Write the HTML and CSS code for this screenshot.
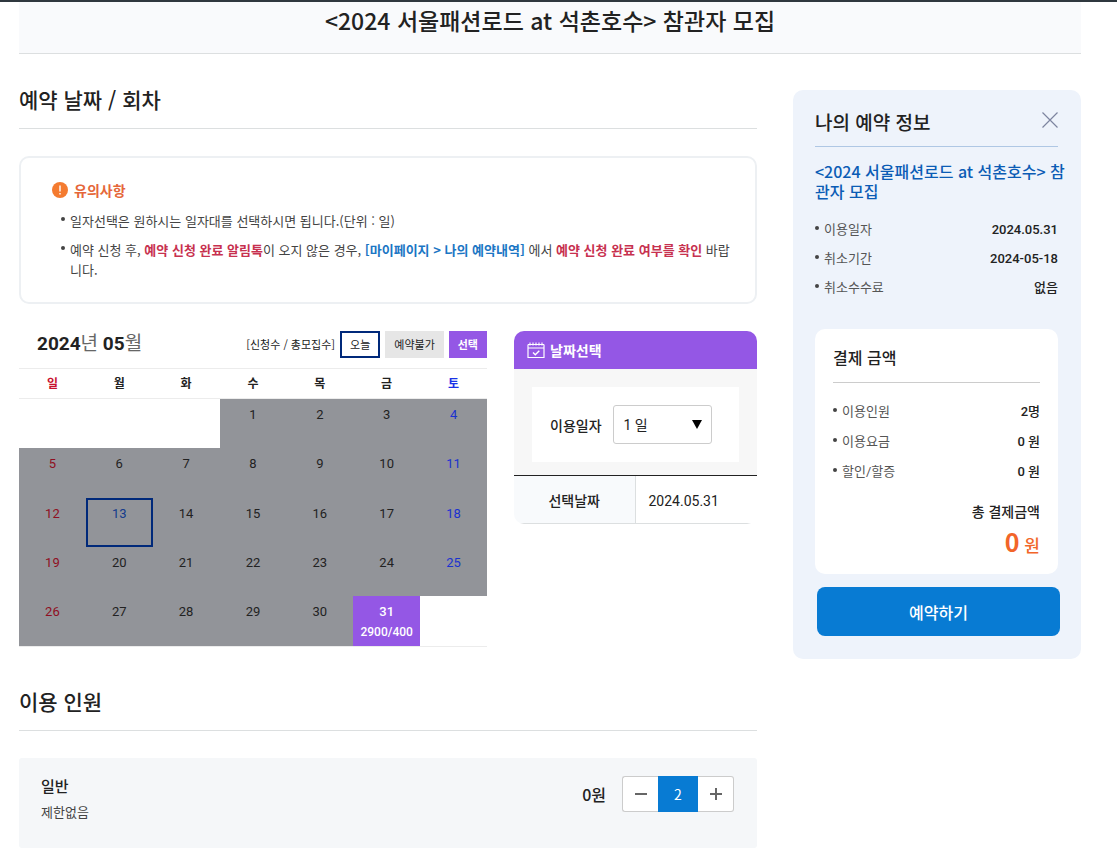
FILE: index.html
```html
<!DOCTYPE html>
<html lang="ko">
<head>
<meta charset="utf-8">
<meta name="viewport" content="width=device-width, initial-scale=1">
<title>서울패션로드 예약</title>
<link rel="stylesheet" href="styles.css">
</head>
<body>
<div class="page">
  <header class="page-title"><h1>&lt;2024 서울패션로드 at 석촌호수&gt; 참관자 모집</h1></header>
  <div class="layout">
    <main>
      <section>
        <h2 class="section-title">예약 날짜 / 회차</h2>
        <div class="notice">
          <h3 class="notice-title">
            <svg width="16" height="16" viewBox="0 0 16 16" aria-hidden="true"><circle cx="8" cy="8" r="8" fill="#f47b30"/><path d="M8 3.5v6M8 11v1.5" stroke="#fff" stroke-width="1.4"/></svg>
            유의사항
          </h3>
          <ul class="notice-list">
            <li><p>일자선택은 원하시는 일자대를 선택하시면 됩니다.(단위 : 일)</p></li>
            <li><p>예약 신청 후, <strong class="red">예약 신청 완료 알림톡</strong>이 오지 않은 경우, <strong class="blue">[마이페이지 &gt; 나의 예약내역]</strong> 에서 <strong class="red">예약 신청 완료 여부를 확인</strong> 바랍니다.</p></li>
          </ul>
        </div>
        <div class="booking">
          <div class="calendar">
            <div class="calendar-head">
              <h3 class="month"><b>2024</b>년 <b>05</b>월</h3>
              <div class="legend">
                <span class="legend-note">[신청수 / 총모집수]</span>
                <span class="tag tag-today">오늘</span>
                <span class="tag tag-off">예약불가</span>
                <span class="tag tag-on">선택</span>
              </div>
            </div>
            <table class="days">
              <thead><tr><th class="sun">일</th><th>월</th><th>화</th><th>수</th><th>목</th><th>금</th><th class="sat">토</th></tr></thead>
              <tbody>
                <tr><td class="empty"></td><td class="empty"></td><td class="empty"></td><td>1</td><td>2</td><td>3</td><td class="sat">4</td></tr>
                <tr><td class="sun">5</td><td>6</td><td>7</td><td>8</td><td>9</td><td>10</td><td class="sat">11</td></tr>
                <tr><td class="sun">12</td><td class="today">13</td><td>14</td><td>15</td><td>16</td><td>17</td><td class="sat">18</td></tr>
                <tr><td class="sun">19</td><td>20</td><td>21</td><td>22</td><td>23</td><td>24</td><td class="sat">25</td></tr>
                <tr><td class="sun">26</td><td>27</td><td>28</td><td>29</td><td>30</td><td class="selected">31<span class="count">2900/400</span></td><td class="empty"></td></tr>
              </tbody>
            </table>
          </div>
          <div class="picker">
            <h3 class="picker-title">
              <svg width="18" height="17" viewBox="0 0 18 17" fill="none" stroke="#fff" aria-hidden="true"><path d="M1 2.5v13h16v-13M1 6h16M1 2.5h16" stroke-width="1.2"/><path d="M3 .5v3M6 .5v3M9 .5v3M12 .5v3M15 .5v3" stroke-width="1.1"/><path d="M6 10.5l2.3 2.2 4-4" stroke-width="1.4"/></svg>
              날짜선택
            </h3>
            <div class="picker-body">
              <div class="picker-field">
                <label for="use-days">이용일자</label>
                <span class="select-wrap">
                  <select id="use-days"><option>1 일</option></select>
                  <svg class="arrow" width="10" height="9" viewBox="0 0 10 9" aria-hidden="true"><path d="M0 0h10L5 9z"/></svg>
                </span>
              </div>
            </div>
            <table class="chosen"><tbody><tr><th scope="row">선택날짜</th><td>2024.05.31</td></tr></tbody></table>
          </div>
        </div>
      </section>
      <section class="people">
        <h2 class="section-title">이용 인원</h2>
        <div class="people-row">
          <div class="people-type"><strong>일반</strong><span>제한없음</span></div>
          <span class="people-price">0원</span>
          <div class="stepper">
            <button type="button" aria-label="인원 감소"><svg width="12" height="12" viewBox="0 0 12 12" aria-hidden="true"><path d="M0 6h12" stroke="#666" stroke-width="2"/></svg></button>
            <input type="text" value="2" aria-label="인원">
            <button type="button" aria-label="인원 추가"><svg width="12" height="12" viewBox="0 0 12 12" aria-hidden="true"><path d="M0 6h12M6 0v12" stroke="#666" stroke-width="2"/></svg></button>
          </div>
        </div>
      </section>
    </main>
    <aside class="summary">
      <div class="summary-head">
        <h2>나의 예약 정보</h2>
        <button type="button" class="close" aria-label="닫기"><svg width="16" height="16" viewBox="0 0 16 16" aria-hidden="true"><path d="M.5.5l15 15M15.5.5l-15 15" stroke="#7d84a0" stroke-width="1.2"/></svg></button>
      </div>
      <p class="summary-name">&lt;2024 서울패션로드 at 석촌호수&gt; 참관자 모집</p>
      <dl class="info">
        <div><dt>이용일자</dt><dd>2024.05.31</dd></div>
        <div><dt>취소기간</dt><dd>2024-05-18</dd></div>
        <div><dt>취소수수료</dt><dd>없음</dd></div>
      </dl>
      <div class="payment">
        <h3>결제 금액</h3>
        <dl class="info">
          <div><dt>이용인원</dt><dd>2명</dd></div>
          <div><dt>이용요금</dt><dd>0 원</dd></div>
          <div><dt>할인/할증</dt><dd>0 원</dd></div>
        </dl>
        <p class="total-label">총 결제금액</p>
        <p class="total"><b>0</b> 원</p>
      </div>
      <button type="button" class="reserve">예약하기</button>
    </aside>
  </div>
</div>
</body>
</html>
```
FILE: styles.css
```css
* { box-sizing: border-box; }
body, h1, h2, h3, p, ul, dl, dd { margin: 0; }
body {
  border-top: 2px solid #2f383f;
  background: #fff;
  color: #222;
  font: 13px/20px "Noto Sans CJK KR", sans-serif;
}
button, input, select { font: inherit; color: inherit; }
button { cursor: pointer; }
svg { display: block; flex: none; }

.page { padding: 0 36px 13px 19px; }
.page-title {
  padding: 2px 0 17px;
  background: #f9fafc;
  border-bottom: 1px solid #dcdfe0;
  text-align: center;
}
h1 { font-size: 23px; line-height: 32px; font-weight: 500; }

.layout {
  display: grid;
  grid-template-columns: minmax(0, 1fr) 288px;
  align-items: start;
  gap: 36px;
  padding-top: 36px;
}
.section-title {
  padding-bottom: 20px;
  border-bottom: 1px solid #dcdfe0;
  font-size: 21px;
  line-height: 18px;
  font-weight: 500;
}

.notice {
  margin-top: 27px;
  padding: 22px 22px 22px 31px;
  border: 2px solid #edf0f3;
  border-radius: 10px;
}
.notice-title {
  display: flex;
  align-items: center;
  gap: 6px;
  color: #e5673a;
  font-size: 14px;
  line-height: 20px;
  font-weight: 700;
}
.notice-list {
  display: grid;
  gap: 9px;
  margin-top: 11px;
  padding: 0 0 0 9px;
  list-style: none;
  color: #444;
}
.notice-list li { display: flex; gap: 5px; }
.notice-list li::before, .info dt::before {
  content: "";
  flex: none;
  width: 4px;
  height: 4px;
  margin-top: 6px;
  border-radius: 50%;
  background: #444;
}
.notice-list strong { font-weight: 700; }
.red { color: #c7314f; }
.blue { color: #1b76c4; }

.booking {
  display: grid;
  grid-template-columns: minmax(0, 1fr) 243px;
  align-items: start;
  gap: 27px;
  margin-top: 27px;
}
.calendar-head {
  display: flex;
  justify-content: space-between;
  padding: 0 0 10px 18px;
  border-bottom: 1px solid #ececec;
}
.month {
  color: #666;
  font: 400 19px/26px Roboto, "Noto Sans CJK KR", sans-serif;
}
.month b { color: #222; font-weight: 700; }
.legend { display: flex; gap: 5px; font-size: 11px; line-height: 27px; }
.tag { padding: 0 9px; }
.tag-today { padding: 0 8px; border: 2px solid #00297a; line-height: 23px; }
.tag-off { background: #e6e6e6; }
.tag-on { background: #9457e5; color: #fff; font-weight: 700; }

.days {
  width: 100%;
  table-layout: fixed;
  border-spacing: 0;
  border-bottom: 1px solid #ececec;
  font: 13px/20px Roboto, "Noto Sans CJK KR", sans-serif;
  text-align: center;
}
.days th { height: 30px; padding: 0; border-bottom: 1px solid #ececec; font-size: 12px; font-weight: 700; }
.days td { height: 49px; padding: 6px 0 0; background: #929499; vertical-align: top; color: #222; }
.days tr:nth-child(3n+2) td { height: 50px; }
.days th.sun { color: #c8102e; }
.days th.sat { color: #1a32e6; }
.days td.sun { color: #8f0f22; }
.days td.sat { color: #1a32d0; }
.days td.empty { background: #fff; }
.days td.today { padding-top: 4px; border: 2px solid #00297a; color: #133b8c; }
.days td.selected { background: #9457e5; color: #fff; font-weight: 500; }
.count { display: block; font-size: 12px; }

.picker { overflow: hidden; border-radius: 10px; }
.picker-title {
  display: flex;
  align-items: center;
  gap: 5px;
  padding: 9px 13px;
  background: #9457e5;
  color: #fff;
  font-size: 14px;
  line-height: 20px;
  font-weight: 700;
}
.picker-body { padding: 18px 18px 13px; background: #f7f7f7; }
.picker-field {
  display: flex;
  align-items: center;
  gap: 11px;
  padding: 18px;
  background: #fff;
  font-size: 14px;
}
.picker-field label { font-weight: 500; }
.select-wrap { position: relative; width: 99px; }
.select-wrap select {
  display: block;
  width: 100%;
  height: 39px;
  padding: 0 10px;
  border: 1px solid #ccc;
  border-radius: 3px;
  background: #fff;
  appearance: none;
  font-family: Roboto, "Noto Sans CJK KR", sans-serif;
}
.arrow { position: absolute; top: 15px; right: 10px; pointer-events: none; }
.chosen {
  width: 100%;
  border-spacing: 0;
  border-top: 1px solid #222;
  border-bottom: 1px solid #dcdfe0;
  font-size: 14px;
}
.chosen th { width: 50%; height: 47px; padding: 0; border-right: 1px solid #dcdfe0; background: #f8fafc; font-weight: 500; }
.chosen td { padding: 2px 13px 0; font-family: Roboto, sans-serif; }

.people { margin-top: 45px; }
.people-row {
  display: flex;
  align-items: flex-start;
  margin-top: 27px;
  padding: 18px 23px 26px 22px;
  background: #f5f7f9;
  border-radius: 3px;
}
.people-type { display: grid; flex: 1; gap: 6px; color: #444; }
.people-type strong { color: #222; font-size: 15px; font-weight: 500; }
.people-price { margin-right: 16px; font-size: 16px; line-height: 36px; font-weight: 500; }
.stepper {
  display: flex;
  width: 112px;
  height: 36px;
}
.stepper button {
  display: flex;
  flex: 1;
  align-items: center;
  justify-content: center;
  padding: 0;
  border: 1px solid #ccc;
  background: #fff;
}
.stepper button:first-child { border-right: 0; border-radius: 3px 0 0 3px; }
.stepper button:last-child { border-left: 0; border-radius: 0 3px 3px 0; }
.stepper input {
  width: 40px;
  padding: 0;
  border: 0;
  border-radius: 0;
  background: #087bd3;
  color: #fff;
  font-size: 14px;
  text-align: center;
}

.summary {
  padding: 22px 23px 23px 22px;
  border-radius: 10px;
  background: #eef3fb;
}
.summary-head {
  display: flex;
  align-items: flex-start;
  justify-content: space-between;
  padding-bottom: 14px;
  border-bottom: 1px solid #afc7e4;
}
.summary-head h2 { font-size: 19px; line-height: 20px; font-weight: 500; }
.close { padding: 0; border: 0; background: none; }
.summary-name {
  margin: 14px -10px 19px 0;
  color: #0b5cb5;
  font-size: 16px;
  line-height: 20px;
  font-weight: 500;
  word-break: break-all;
}
.info { display: grid; gap: 9px; font-family: Roboto, "Noto Sans CJK KR", sans-serif; }
.info div { display: flex; justify-content: space-between; }
.info dt { display: flex; gap: 5px; color: #555; }
.info dd { font-weight: 500; }
.payment { margin-top: 31px; padding: 18px 18px 14px; border-radius: 10px; background: #fff; }
.payment h3 { padding-bottom: 15px; border-bottom: 1px solid #ccc; font-size: 16px; line-height: 20px; font-weight: 500; }
.payment .info { gap: 10px; margin-top: 19px; }
.total-label { margin-top: 19px; font-size: 14px; line-height: 20px; font-weight: 500; text-align: right; }
.total { margin-top: 5px; color: #f26529; font-size: 17px; line-height: 30px; font-weight: 500; text-align: right; }
.total b { font-size: 25px; }
.reserve {
  display: block;
  width: 100%;
  height: 49px;
  margin: 13px 0 0 2px;
  border: 0;
  border-radius: 8px;
  background: #087bd3;
  color: #fff;
  font-size: 16px;
  font-weight: 500;
}
```
